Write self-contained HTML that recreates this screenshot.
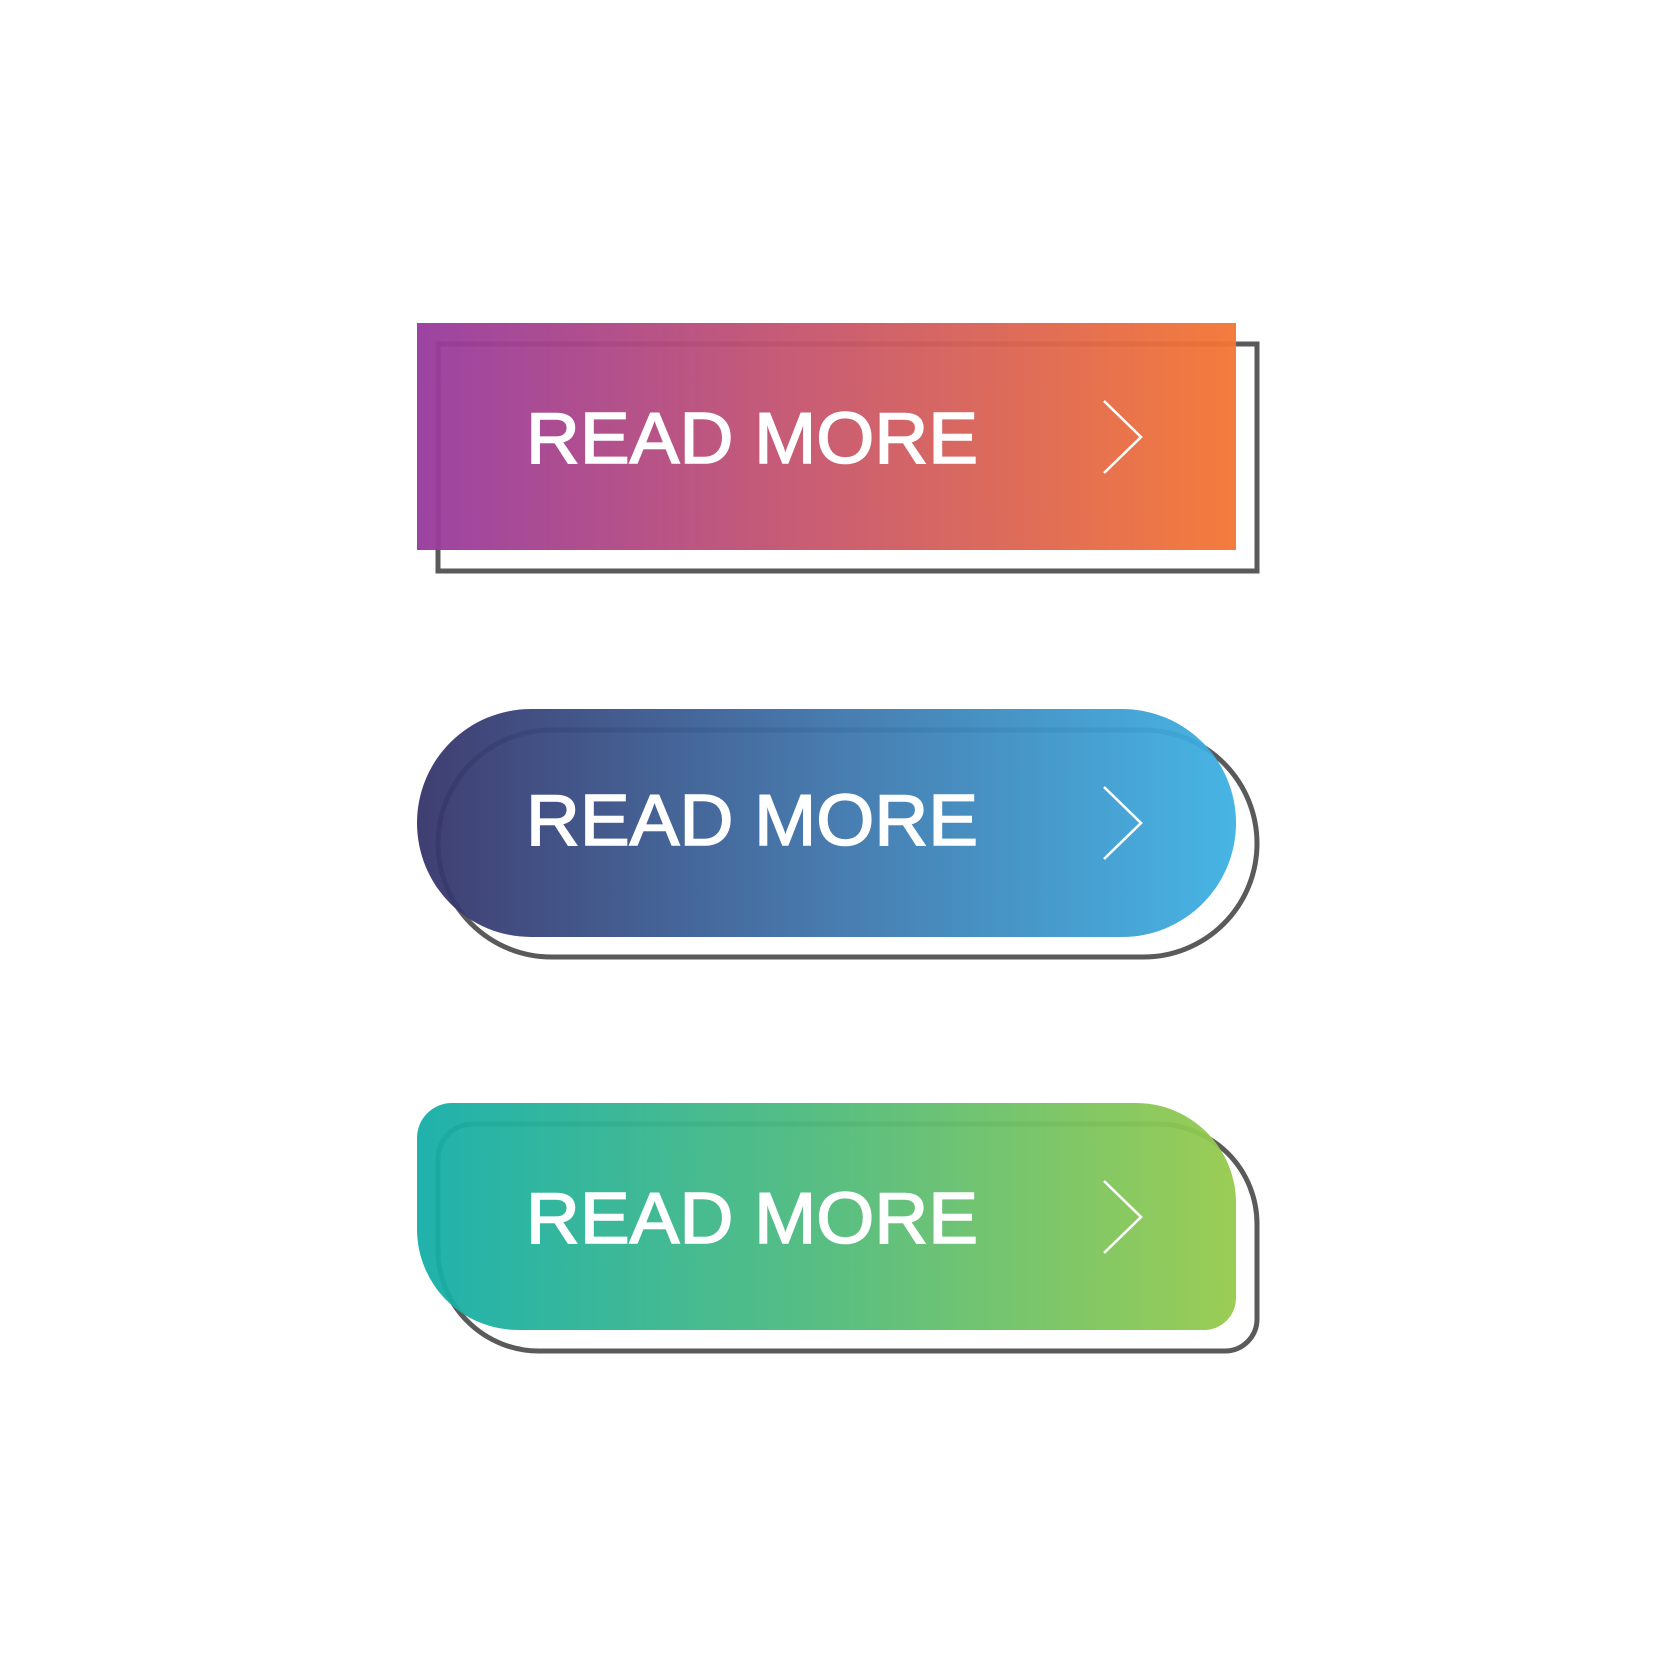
<!DOCTYPE html>
<html><head><meta charset="utf-8"><style>
html,body{margin:0;padding:0;background:#fff;width:1667px;height:1667px;overflow:hidden}
svg{display:block}
text{font-family:"Liberation Sans",sans-serif;font-weight:normal;fill:#fff;stroke:#fff;stroke-width:1.6}
</style></head><body>
<svg width="1667" height="1667" viewBox="0 0 1667 1667" xmlns="http://www.w3.org/2000/svg">
<defs>
<linearGradient id="g1" x1="0" x2="1"><stop offset="0" stop-color="#973a9e"/><stop offset="0.5" stop-color="#c8566a"/><stop offset="1" stop-color="#f47533"/></linearGradient>
<linearGradient id="g2" x1="0" x2="1"><stop offset="0" stop-color="#36346a"/><stop offset="0.5" stop-color="#3e74aa"/><stop offset="1" stop-color="#3db1e3"/></linearGradient>
<linearGradient id="g3" x1="0" x2="1"><stop offset="0" stop-color="#14aea8"/><stop offset="0.5" stop-color="#50bb7c"/><stop offset="1" stop-color="#96ca4c"/></linearGradient>
</defs>
<g fill="none" stroke="#5a5a5a" stroke-width="5">
<rect x="438" y="344" width="819" height="227"/>
<rect x="438" y="730" width="819" height="227" rx="113.5"/>
<path d="M473,1124 H1157 A100,100 0 0 1 1257,1224 V1319 A32,32 0 0 1 1225,1351 H539 A101,101 0 0 1 438,1250 V1159 A35,35 0 0 1 473,1124 Z"/>
</g>
<g opacity="0.95">
<rect x="417" y="323" width="819" height="227" fill="url(#g1)"/>
<rect x="417" y="709" width="819" height="228" rx="114" fill="url(#g2)"/>
<path fill="url(#g3)" d="M452,1103 H1136 A100,100 0 0 1 1236,1203 V1298 A32,32 0 0 1 1204,1330 H518 A101,101 0 0 1 417,1229 V1138 A35,35 0 0 1 452,1103 Z"/>
</g>
<g font-size="72">
<text x="526" y="463" textLength="452" lengthAdjust="spacingAndGlyphs">READ MORE</text>
<text x="526" y="845" textLength="452" lengthAdjust="spacingAndGlyphs">READ MORE</text>
<text x="526" y="1243" textLength="452" lengthAdjust="spacingAndGlyphs">READ MORE</text>
</g>
<g fill="none" stroke="#fff" stroke-width="2.6">
<path d="M1104,401 L1141,437 L1104,473"/>
<path d="M1104,787 L1141,823 L1104,859"/>
<path d="M1104,1181 L1141,1217 L1104,1253"/>
</g>
</svg>
</body></html>
